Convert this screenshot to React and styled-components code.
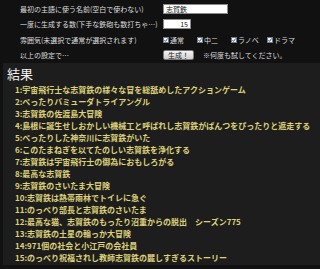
import React from 'react'
import styled, { createGlobalStyle } from 'styled-components'

const Global = createGlobalStyle`
  html, body { margin: 0; padding: 0; background: #111111; }
  body { font-family: "Noto Sans CJK JP", "Noto Sans", sans-serif; overflow: hidden; }
`

const Page = styled.div`
  width: 320px;
  height: 269px;
  background: #111111;
`

const Form = styled.div`
  display: grid;
  grid-template-columns: 143px 1fr;
  padding: 1px 0 0 20px;
  height: 63px;
  box-sizing: border-box;
`

const Label = styled.div`
  color: #dddddd;
  font-size: 7px;
  height: 15px;
  display: flex;
  align-items: center;
  white-space: nowrap;
`

const Field = styled.div`
  height: 15px;
  display: flex;
  align-items: center;
  gap: ${p => p.gap || 0}px;
`

const TextInput = styled.div`
  width: ${p => p.w}px;
  height: 10px;
  box-sizing: border-box;
  background: #ffffff;
  border: 1px solid #8a8a8a;
  color: #111;
  font-size: 7px;
  line-height: 8px;
  padding: 0 2px;
  text-align: ${p => p.align || 'left'};
`

const Check = styled.label`
  display: flex;
  align-items: center;
  gap: 1px;
  width: ${p => p.w}px;
  color: #dddddd;
  font-size: 7px;
`

const Box = styled.span`
  width: 6px;
  height: 6px;
  background: #f4f4f4;
  border: 1px solid #777;
  box-sizing: border-box;
  display: inline-flex;
  svg { display: block; }
`

const Button = styled.div`
  width: 31px;
  height: 10px;
  box-sizing: border-box;
  border: 1px solid #777;
  border-radius: 2px;
  background: linear-gradient(#f4f4f4, #cfcfcf);
  color: #222;
  font-size: 7px;
  line-height: 8px;
  text-align: center;
`

const Note = styled.span`
  color: #dddddd;
  font-size: 7px;
  margin-left: 9px;
`

const Panel = styled.div`
  margin-left: 3px;
  height: 202px;
  background: #1d1d1d;
  padding: 2px 0 0 4px;
  box-sizing: border-box;
`

const Heading = styled.h2`
  margin: 0;
  color: #f0f0f0;
  font-size: 13px;
  font-weight: normal;
  line-height: 18px;
`

const List = styled.ol`
  list-style: none;
  margin: 0;
  padding: 1px 0 0 8px;
`

const Item = styled.li`
  color: #ddd27a;
  font-size: 8px;
  font-weight: bold;
  line-height: 12px;
  white-space: nowrap;
`

const results = [
  '宇宙飛行士な志賀鉄の様々な冒を総舐めしたアクションゲーム',
  'ぺったりバミューダトライアングル',
  '志賀鉄の佐渡島大冒険',
  '島根に誕生せしおかしい機械工と呼ばれし志賀鉄がぱんつをぴったりと遮走する',
  'ぺったりした神奈川に志賀鉄がいた',
  'このたまねぎを以てたのしい志賀鉄を浄化する',
  '志賀鉄は宇宙飛行士の御為におもしろがる',
  '最高な志賀鉄',
  '志賀鉄のさいたま大冒険',
  '志賀鉄は熱帯雨林でトイレに急ぐ',
  'のっぺり部長と志賀鉄のさいたま',
  '最高な猫、志賀鉄のもったり沼重からの脱出　シーズン775',
  '志賀鉄の土星の輪っか大冒険',
  '971個の社会と小江戸の会社員',
  'のっぺり祝福されし教師志賀鉄の麗しすぎるストーリー',
]

const Tick = () => (
  <svg width="4" height="4" viewBox="0 0 4 4">
    <path d="M0.4 2 L1.6 3.4 L3.6 0.5" stroke="#2a4fb8" strokeWidth="0.9" fill="none" />
  </svg>
)

export default function App() {
  return (
    <Page>
      <Global />
      <Form>
        <Label>最初の主語に使う名前(空白で使わない)</Label>
        <Field><TextInput w={65}>志賀鉄</TextInput></Field>
        <Label>一度に生成する数(下手な鉄砲も数打ちゃ…)</Label>
        <Field><TextInput w={28} align="right">15</TextInput></Field>
        <Label>雰囲気(未選択で通常が選択されます)</Label>
        <Field>
          <Check w={34}><Box><Tick /></Box>通常</Check>
          <Check w={34}><Box><Tick /></Box>中二</Check>
          <Check w={36}><Box><Tick /></Box>ラノベ</Check>
          <Check w={34}><Box><Tick /></Box>ドラマ</Check>
        </Field>
        <Label>以上の設定で…</Label>
        <Field>
          <Button>生成！</Button>
          <Note>※何度も試してください。</Note>
        </Field>
      </Form>
      <Panel>
        <Heading>結果</Heading>
        <List>
          {results.map((r, i) => (
            <Item key={i}>{i + 1}:{r}</Item>
          ))}
        </List>
      </Panel>
    </Page>
  )
}
